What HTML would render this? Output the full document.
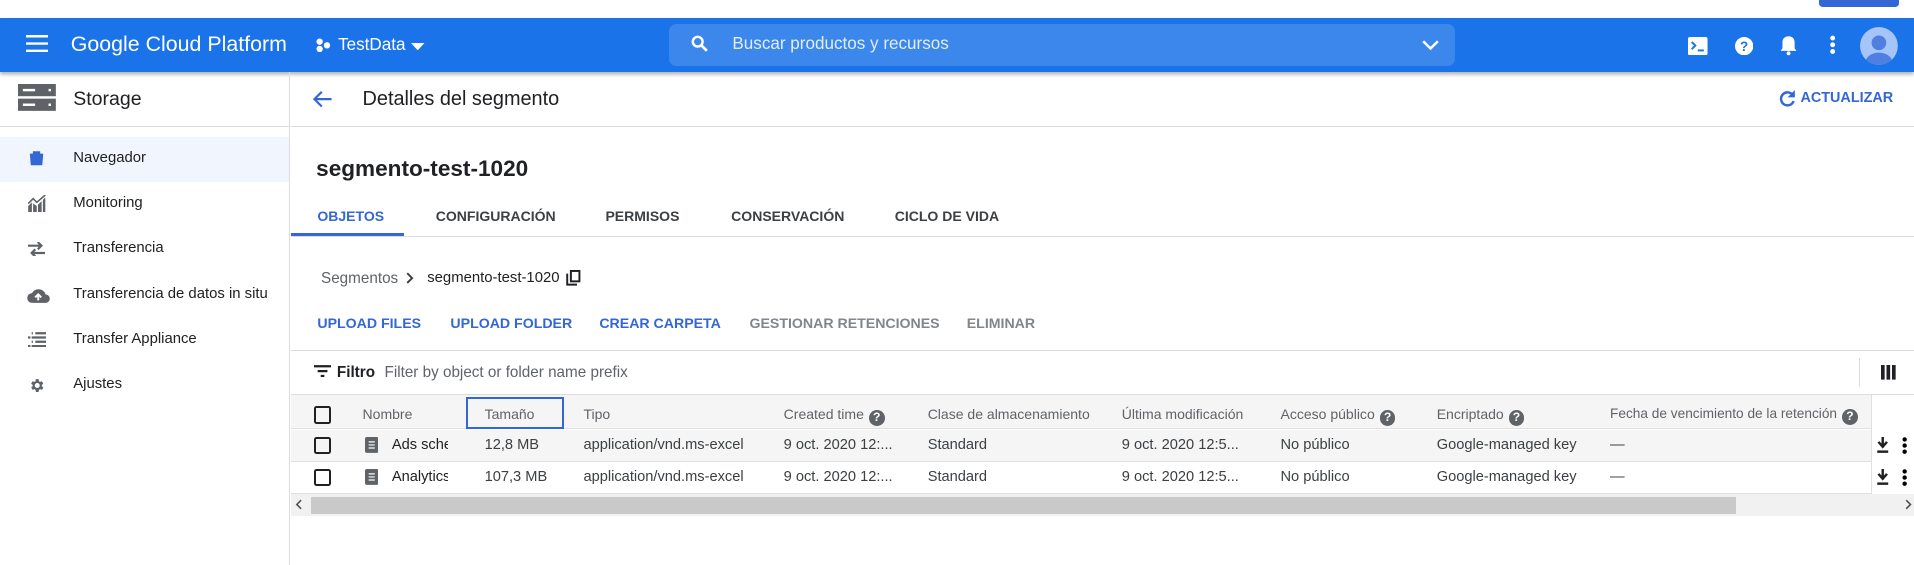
<!DOCTYPE html>
<html><head><meta charset="utf-8"><style>
html,body{margin:0;padding:0;background:#fff;overflow:hidden}
#w{zoom:1.22066;width:1568px;height:463px;position:relative;font-family:"Liberation Sans",Roboto,sans-serif;color:#202124;overflow:hidden}
.a{position:absolute;white-space:nowrap}
.hd{top:15px;left:0;width:1568px;height:44px;background:#1a73e8;box-shadow:0 2px 3px rgba(0,0,0,.3)}
.side{top:59px;left:0;width:237px;height:404px;border-right:1px solid #dadce0}
.nav{font-size:12.2px;left:60px}
.ic{fill:#5f6368}
.tab{font-size:11.5px;font-weight:bold;color:#3c4043;top:170px}
.btn{font-size:11.6px;font-weight:bold;top:258px}
.th{font-size:11.5px;color:#5f6368;top:333px}
.td{font-size:12px;color:#3c4043}
.cb{width:11px;height:11px;border:2px solid #202124;border-radius:2px;left:257px}
.q{display:inline-block;width:13px;height:13px;border-radius:50%;background:#5f6368;color:#fff;font-size:10px;font-weight:bold;text-align:center;line-height:13px;vertical-align:-1px;margin-left:4px}
</style></head><body><div id="w">
<div class="a" style="left:1490px;top:0;width:66px;height:6px;background:#3367d6;border-radius:0 0 3px 3px"></div>
<div class="a hd">
 <svg class="a" style="left:21px;top:14px" width="18" height="14" viewBox="0 0 18 14"><path d="M0 1h18M0 7h18M0 13h18" stroke="#fff" stroke-width="2"/></svg>
 <div class="a" style="left:58px;top:11px;font-size:17.5px;color:#fff">Google Cloud Platform</div>
 <svg class="a" style="left:259px;top:16px" width="12" height="12"><circle cx="3" cy="3" r="2.6" fill="#fff"/><circle cx="3" cy="9" r="2.6" fill="#fff"/><circle cx="9" cy="6" r="2.6" fill="#fff"/></svg>
 <div class="a" style="left:277px;top:14px;font-size:14px;color:#fff">TestData</div>
 <svg class="a" style="left:337px;top:20px" width="11" height="6"><path d="M0 0h11L5.5 6z" fill="#fff"/></svg>
 <div class="a" style="left:548px;top:5px;width:644px;height:34px;background:rgba(255,255,255,.15);border-radius:6px"></div>
 <svg class="a" style="left:566px;top:14px" width="14" height="14" viewBox="0 0 14 14"><circle cx="5.5" cy="5.5" r="4" stroke="#fff" stroke-width="2" fill="none"/><path d="M8.5 8.5L13 13" stroke="#fff" stroke-width="2.2"/></svg>
 <div class="a" style="left:600px;top:13px;font-size:14px;color:rgba(255,255,255,.85)">Buscar productos y recursos</div>
 <svg class="a" style="left:1165px;top:18px" width="14" height="9"><path d="M1 1l6 6 6-6" stroke="#fff" stroke-width="2" fill="none"/></svg>
 <svg class="a" style="left:1383px;top:15px" width="16" height="15"><rect width="16" height="15" rx="1.5" fill="#fff"/><path d="M3 4l3 3-3 3" stroke="#1a73e8" stroke-width="1.6" fill="none"/><path d="M8 11h5" stroke="#1a73e8" stroke-width="1.6"/></svg>
 <svg class="a" style="left:1421px;top:15px" width="15" height="15"><circle cx="7.5" cy="7.5" r="7.5" fill="#fff"/><text x="7.5" y="11.5" font-size="11" font-weight="bold" text-anchor="middle" fill="#1a73e8" font-family="Liberation Sans">?</text></svg>
 <svg class="a" style="left:1458px;top:14px" width="14" height="17" viewBox="0 0 14 17"><path d="M7 1c-3 0-5 2-5 5v5l-1.5 2h13L12 11V6c0-3-2-5-5-5z" fill="#fff"/><circle cx="7" cy="15" r="1.6" fill="#fff"/></svg>
 <svg class="a" style="left:1498px;top:14px" width="6" height="16"><circle cx="3" cy="2.5" r="2" fill="#fff"/><circle cx="3" cy="8" r="2" fill="#fff"/><circle cx="3" cy="13.5" r="2" fill="#fff"/></svg>
 <svg class="a" style="left:1524px;top:7px" width="31" height="31" viewBox="0 0 31 31"><defs><clipPath id="c"><circle cx="15.5" cy="15.5" r="15.5"/></clipPath></defs><circle cx="15.5" cy="15.5" r="15.5" fill="#a5c4f7"/><g clip-path="url(#c)" fill="#4f7fe0"><circle cx="15.5" cy="13" r="6"/><ellipse cx="15.5" cy="29" rx="11" ry="8"/></g></svg>
</div>
<div class="a side">
 <svg class="a" style="left:15px;top:10px" width="31" height="22"><rect width="31" height="10" fill="#5f6368"/><rect y="12" width="31" height="10" fill="#5f6368"/><rect x="4" y="4" width="10" height="2" fill="#fff"/><rect x="4" y="16" width="10" height="2" fill="#fff"/><rect x="25" y="4" width="2" height="2" fill="#fff"/><rect x="25" y="16" width="2" height="2" fill="#fff"/></svg>
 <div class="a" style="left:60px;top:13px;font-size:16px">Storage</div>
 <div class="a" style="left:0;top:44px;width:237px;border-top:1px solid #dadce0"></div>
 <div class="a" style="left:0;top:53px;width:237px;height:37px;background:#f1f5fd"></div>
</div>
<svg class="a" style="left:23px;top:123px" width="14" height="14"><path d="M4 1h6v2h2.5l-.8 9.5H2.3L1.5 3H4z" fill="#3367d6"/></svg>
<div class="a nav" style="top:123px">Navegador</div>
<svg class="a ic" style="left:22px;top:160px" width="16" height="14"><path d="M1 14V9l3-3v8zM5 14V7l3 2v5zM9 14V8l3-3v9zM13 14V4l2-2v12z"/><path d="M1 7l4-4 3 3 7-6" stroke="#5f6368" fill="none" stroke-width="1.3"/></svg>
<div class="a nav" style="top:160px">Monitoring</div>
<svg class="a" style="left:23px;top:198px" width="14" height="12"><path d="M0 3h11M8 0l3 3-3 3M14 9H3M6 6l-3 3 3 3" stroke="#5f6368" stroke-width="1.8" fill="none"/></svg>
<div class="a nav" style="top:197px">Transferencia</div>
<svg class="a" style="left:21px;top:235px" width="20" height="13"><path d="M5 13a4 4 0 0 1 0-8 6 6 0 0 1 11 1 3.5 3.5 0 0 1 0 7z" fill="#5f6368"/><path d="M10 11V6M7.5 8.5L10 6l2.5 2.5" stroke="#fff" stroke-width="1.6" fill="none"/></svg>
<div class="a nav" style="top:234px">Transferencia de datos in situ</div>
<svg class="a" style="left:23px;top:272px" width="15" height="12"><path d="M6 1h9M3 4.5h12M6 8h9M3 11.5h12M0 4.5h2M0 11.5h2M3 1h1M3 8h1" stroke="#5f6368" stroke-width="1.8"/></svg>
<div class="a nav" style="top:271px">Transfer Appliance</div>
<svg class="a" style="left:23px;top:309px" width="14" height="14" viewBox="0 0 24 24"><path fill="#5f6368" d="M19.4 13a7.8 7.8 0 0 0 0-2l2.1-1.6-2-3.5-2.5 1a7.3 7.3 0 0 0-1.7-1L15 3h-4l-.4 2.9a7.3 7.3 0 0 0-1.7 1l-2.5-1-2 3.5L6.6 11a7.8 7.8 0 0 0 0 2l-2.1 1.6 2 3.5 2.5-1a7.3 7.3 0 0 0 1.7 1L11 21h4l.4-2.9a7.3 7.3 0 0 0 1.7-1l2.5 1 2-3.5zM13 15.5a3.5 3.5 0 1 1 0-7 3.5 3.5 0 0 1 0 7z"/></svg>
<div class="a nav" style="top:308px">Ajustes</div>

<svg class="a" style="left:256px;top:74px" width="16" height="15"><path d="M16 7.5H2M8 1.5l-6 6 6 6" stroke="#3367d6" stroke-width="1.8" fill="none"/></svg>
<div class="a" style="left:297px;top:72px;font-size:16.3px">Detalles del segmento</div>
<svg class="a" style="left:1457px;top:74px" width="14" height="14" viewBox="0 0 14 14"><path d="M11.5 4.5A5.3 5.3 0 1 0 12 9" stroke="#3367d6" stroke-width="2" fill="none"/><path d="M13 0v6H7z" fill="#3367d6"/></svg>
<div class="a" style="left:1475px;top:74px;font-size:11.8px;font-weight:bold;color:#3367d6">ACTUALIZAR</div>
<div class="a" style="left:238px;top:103px;width:1330px;border-top:1px solid #dadce0"></div>
<div class="a" style="left:259px;top:128px;font-size:18.5px;font-weight:bold">segmento-test-1020</div>
<div class="a tab" style="left:260px;color:#3367d6">OBJETOS</div>
<div class="a tab" style="left:357px">CONFIGURACIÓN</div>
<div class="a tab" style="left:496px">PERMISOS</div>
<div class="a tab" style="left:599px">CONSERVACIÓN</div>
<div class="a tab" style="left:733px">CICLO DE VIDA</div>
<div class="a" style="left:238px;top:191px;width:93px;height:2px;background:#3367d6"></div>
<div class="a" style="left:238px;top:193px;width:1330px;border-top:1px solid #dadce0"></div>
<div class="a" style="left:263px;top:221px;font-size:12.5px;color:#5f6368">Segmentos</div>
<svg class="a" style="left:333px;top:223px" width="7" height="10"><path d="M1 1l4 4-4 4" stroke="#3c4043" stroke-width="1.6" fill="none"/></svg>
<div class="a" style="left:350px;top:221px;font-size:12.2px">segmento-test-1020</div>
<svg class="a" style="left:464px;top:221px" width="12" height="13"><path d="M1 3v9h8" stroke="#202124" stroke-width="1.6" fill="none"/><rect x="4" y="0.8" width="7" height="8.5" stroke="#202124" stroke-width="1.6" fill="none"/></svg>
<div class="a btn" style="left:260px;color:#3367d6">UPLOAD FILES</div>
<div class="a btn" style="left:369px;color:#3367d6">UPLOAD FOLDER</div>
<div class="a btn" style="left:491px;color:#3367d6">CREAR CARPETA</div>
<div class="a btn" style="left:614px;color:#80868b">GESTIONAR RETENCIONES</div>
<div class="a btn" style="left:792px;color:#80868b">ELIMINAR</div>
<div class="a" style="left:238px;top:287px;width:1330px;border-top:1px solid #dadce0"></div>
<svg class="a" style="left:257px;top:299px" width="14" height="10"><path d="M0 1h14M3 5h8M5.5 9h3" stroke="#202124" stroke-width="1.8"/></svg>
<div class="a" style="left:276px;top:298px;font-size:12.5px;font-weight:bold">Filtro</div>
<div class="a" style="left:315px;top:298px;font-size:12.5px;color:#5f6368">Filter by object or folder name prefix</div>
<svg class="a" style="left:1541px;top:299px" width="12" height="12"><path d="M0 0h3v12H0zM4.5 0h3v12h-3zM9 0h3v12H9z" fill="#202124"/></svg>
<div class="a" style="left:1523px;top:293px;height:24px;border-left:1px solid #dadce0"></div>
<div class="a" style="left:238px;top:323px;width:1330px;border-top:1px solid #dadce0"></div>
<div class="a" style="left:238px;top:324px;width:1296px;height:27px;background:#f5f5f5;border-bottom:1px solid #e0e0e0"></div>
<div class="a" style="left:238px;top:352px;width:1296px;height:26px;background:#f5f5f5;border-bottom:1px solid #e0e0e0"></div>
<div class="a" style="left:238px;top:379px;width:1296px;height:25px;border-bottom:1px solid #e0e0e0"></div>
<div class="a" style="left:1533px;top:324px;height:80px;border-left:1px solid #e0e0e0"></div>
<div class="a cb" style="top:333px"></div>
<div class="a th" style="left:297px">Nombre</div>
<div class="a" style="left:382px;top:325px;width:77px;height:23px;border:2px solid #3367d6"></div>
<div class="a th" style="left:397px">Tamaño</div>
<div class="a th" style="left:478px">Tipo</div>
<div class="a th" style="left:642px">Created time<span class="q">?</span></div>
<div class="a th" style="left:760px">Clase de almacenamiento</div>
<div class="a th" style="left:919px">Última modificación</div>
<div class="a th" style="left:1049px">Acceso público<span class="q">?</span></div>
<div class="a th" style="left:1177px">Encriptado<span class="q">?</span></div>
<div class="a th" style="left:1319px;font-size:11.2px">Fecha de vencimiento de la retención<span class="q">?</span></div>

<div class="a cb" style="top:358px"></div>
<div class="a cb" style="top:384px"></div>
<svg class="a" style="left:299px;top:358px" width="11" height="13"><rect width="11" height="13" rx="1.5" fill="#5f6368"/><path d="M3 4h5M3 6.5h5M3 9h5" stroke="#fff"/></svg>
<svg class="a" style="left:299px;top:384px" width="11" height="13"><rect width="11" height="13" rx="1.5" fill="#5f6368"/><path d="M3 4h5M3 6.5h5M3 9h5" stroke="#fff"/></svg>
<div class="a td" style="left:321px;top:358px;width:46px;overflow:hidden;color:#202124">Ads schema</div>
<div class="a td" style="left:321px;top:384px;width:46px;overflow:hidden;color:#202124">Analytics</div>
<div class="a td" style="left:397px;top:358px">12,8 MB</div>
<div class="a td" style="left:397px;top:384px">107,3 MB</div>
<div class="a td" style="left:478px;top:358px">application/vnd.ms-excel</div>
<div class="a td" style="left:478px;top:384px">application/vnd.ms-excel</div>
<div class="a td" style="left:642px;top:358px">9 oct. 2020 12:...</div>
<div class="a td" style="left:642px;top:384px">9 oct. 2020 12:...</div>
<div class="a td" style="left:760px;top:358px">Standard</div>
<div class="a td" style="left:760px;top:384px">Standard</div>
<div class="a td" style="left:919px;top:358px">9 oct. 2020 12:5...</div>
<div class="a td" style="left:919px;top:384px">9 oct. 2020 12:5...</div>
<div class="a td" style="left:1049px;top:358px">No público</div>
<div class="a td" style="left:1049px;top:384px">No público</div>
<div class="a td" style="left:1177px;top:358px">Google-managed key</div>
<div class="a td" style="left:1177px;top:384px">Google-managed key</div>
<div class="a td" style="left:1319px;top:358px">—</div>
<div class="a td" style="left:1319px;top:384px">—</div>
<svg class="a" style="left:1537px;top:358px" width="11" height="13"><path d="M5.5 0v7M2 4l3.5 4L9 4" stroke="#202124" stroke-width="2" fill="none"/><path d="M1 12h9" stroke="#202124" stroke-width="2"/></svg>
<svg class="a" style="left:1537px;top:384px" width="11" height="13"><path d="M5.5 0v7M2 4l3.5 4L9 4" stroke="#202124" stroke-width="2" fill="none"/><path d="M1 12h9" stroke="#202124" stroke-width="2"/></svg>
<svg class="a" style="left:1557px;top:358px" width="6" height="14"><circle cx="3" cy="2" r="1.8"/><circle cx="3" cy="7" r="1.8"/><circle cx="3" cy="12" r="1.8"/></svg>
<svg class="a" style="left:1557px;top:384px" width="6" height="14"><circle cx="3" cy="2" r="1.8"/><circle cx="3" cy="7" r="1.8"/><circle cx="3" cy="12" r="1.8"/></svg>
<div class="a" style="left:238px;top:405px;width:1330px;height:18px;background:#f1f1f1"></div>
<div class="a" style="left:255px;top:407px;width:1167px;height:14px;background:#c9c9c9"></div>
<svg class="a" style="left:242px;top:409px" width="6" height="9"><path d="M5 1L1.5 4.5 5 8" stroke="#505050" stroke-width="1.3" fill="none"/></svg>
<svg class="a" style="left:1561px;top:409px" width="6" height="9"><path d="M1 1l3.5 3.5L1 8" stroke="#505050" stroke-width="1.3" fill="none"/></svg>
</div></body></html>
